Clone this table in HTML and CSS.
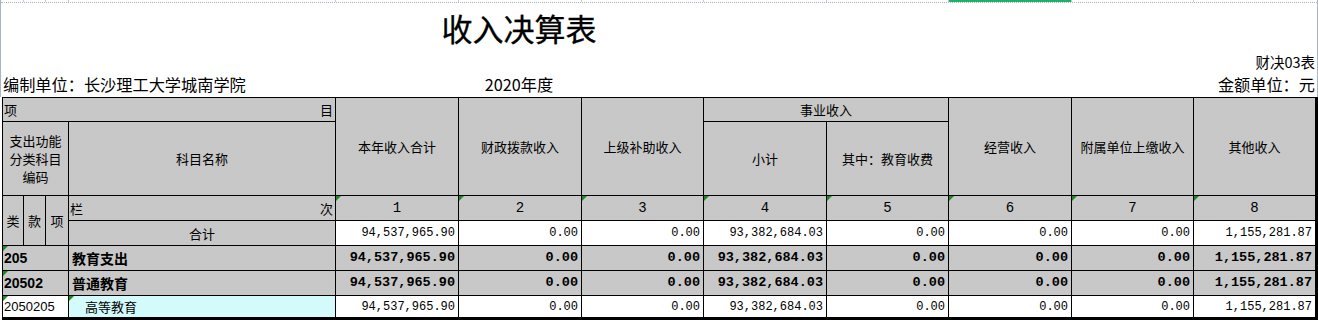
FILE: index.html
```html
<!DOCTYPE html>
<html lang="zh-CN">
<head>
<meta charset="utf-8">
<title>收入决算表</title>
<link rel="stylesheet" href="styles.css">
</head>
<body>
<div class="top">
  <div class="strip">
    <div class="ticks">
      <span></span><span></span><span></span><span></span><span></span><span></span>
      <span></span><span></span><span></span><span class="sel"></span><span></span><span></span>
    </div>
  </div>
  <div class="caption">
    <div class="title">收入决算表</div>
    <div class="formno">财决03表</div>
    <div class="unit">编制单位：长沙理工大学城南学院</div>
    <div class="year">2020年度</div>
    <div class="money">金额单位：元</div>
  </div>
</div>

<div class="sheet">
  <div class="row head">
    <div class="cell span4 split"><span>项</span><span>目</span></div>
    <div class="cell rs2">本年收入合计</div>
    <div class="cell rs2">财政拨款收入</div>
    <div class="cell rs2">上级补助收入</div>
    <div class="cell span2">事业收入</div>
    <div class="cell rs2">经营收入</div>
    <div class="cell rs2">附属单位上缴收入</div>
    <div class="cell rs2">其他收入</div>
  </div>
  <div class="row head">
    <div class="cell span3 multi">支出功能<br>分类科目<br>编码</div>
    <div class="cell">科目名称</div>
    <div class="cell">小计</div>
    <div class="cell">其中：教育收费</div>
  </div>
  <div class="row head">
    <div class="cell rs2">类</div>
    <div class="cell rs2">款</div>
    <div class="cell rs2">项</div>
    <div class="cell split"><span>栏</span><span>次</span></div>
    <div class="cell colno flag">1</div>
    <div class="cell colno flag">2</div>
    <div class="cell colno flag">3</div>
    <div class="cell colno flag">4</div>
    <div class="cell colno flag">5</div>
    <div class="cell colno flag">6</div>
    <div class="cell colno flag">7</div>
    <div class="cell colno flag">8</div>
  </div>
  <div class="row total">
    <div class="cell">合计</div>
    <div class="cell num white">94,537,965.90</div>
    <div class="cell num white">0.00</div>
    <div class="cell num white">0.00</div>
    <div class="cell num white">93,382,684.03</div>
    <div class="cell num white">0.00</div>
    <div class="cell num white">0.00</div>
    <div class="cell num white">0.00</div>
    <div class="cell num white">1,155,281.87</div>
  </div>
  <div class="row bold">
    <div class="cell span3 code flag">205</div>
    <div class="cell name">教育支出</div>
    <div class="cell num">94,537,965.90</div>
    <div class="cell num">0.00</div>
    <div class="cell num">0.00</div>
    <div class="cell num">93,382,684.03</div>
    <div class="cell num">0.00</div>
    <div class="cell num">0.00</div>
    <div class="cell num">0.00</div>
    <div class="cell num">1,155,281.87</div>
  </div>
  <div class="row bold">
    <div class="cell span3 code flag">20502</div>
    <div class="cell name">普通教育</div>
    <div class="cell num">94,537,965.90</div>
    <div class="cell num">0.00</div>
    <div class="cell num">0.00</div>
    <div class="cell num">93,382,684.03</div>
    <div class="cell num">0.00</div>
    <div class="cell num">0.00</div>
    <div class="cell num">0.00</div>
    <div class="cell num">1,155,281.87</div>
  </div>
  <div class="row item">
    <div class="cell span3 code white flag">2050205</div>
    <div class="cell name sub cyan flag">高等教育</div>
    <div class="cell num white">94,537,965.90</div>
    <div class="cell num white">0.00</div>
    <div class="cell num white">0.00</div>
    <div class="cell num white">93,382,684.03</div>
    <div class="cell num white">0.00</div>
    <div class="cell num white">0.00</div>
    <div class="cell num white">0.00</div>
    <div class="cell num white">1,155,281.87</div>
  </div>
</div>
</body>
</html>
```
FILE: styles.css
```css
* {
  box-sizing: border-box;
  margin: 0;
  padding: 0;
}

html,
body {
  background: #ffffff;
}

body {
  width: 1318px;
  height: 320px;
  overflow: hidden;
  font-family: "Noto Sans CJK SC", "Noto Sans", sans-serif;
  color: #000000;
}

/* ---------- sheet top / caption ---------- */
.top {
  width: 1318px;
  border-left: 1px solid #a8b5c7;
  border-right: 1px solid #a8b5c7;
}

.strip {
  height: 3px;
  border-bottom: 1px dotted #a9b4c3;
}

.ticks {
  display: grid;
  grid-template-columns: 20px 21px 22px 266px 122px 122px 121px 122px 121px 122px 121px 121px;
  column-gap: 1px;
  width: 1312px;
  height: 2px;
  margin-left: 2px;
  background: #c2cad6;
}

.ticks span {
  background: #ffffff;
}

.ticks .sel {
  background: #21b06c;
}

.caption {
  display: grid;
  grid-template-columns: 334px 368px 1fr;
  grid-template-rows: 50px 18px 26px;
}

.title {
  grid-column: 2;
  grid-row: 1;
  text-align: center;
  font-size: 31px;
  line-height: 50px;
  -webkit-text-stroke: 0.3px #000000;
}

.formno {
  grid-column: 3;
  grid-row: 2;
  text-align: right;
  font-size: 14.5px;
  line-height: 18px;
  padding-right: 2px;
}

.unit,
.year,
.money {
  grid-row: 3;
  font-size: 16.2px;
  line-height: 26px;
  white-space: nowrap;
}

.unit {
  grid-column: 1;
  padding-left: 2px;
}

.year {
  grid-column: 2;
  text-align: center;
}

.money {
  grid-column: 3;
  text-align: right;
  padding-right: 2px;
}

/* ---------- table ---------- */
.sheet {
  display: grid;
  grid-template-columns: 20px 21px 22px 266px 122px 122px 121px 122px 121px 122px 121px 121px;
  grid-template-rows: 23px 73px 24px 24px 24px 24px 21px;
  gap: 1px;
  width: max-content;
  margin-left: 2px;
  background: #000000;
  border-left: 1px solid #000000;
  border-top: 1px solid #000000;
  border-right: 3px solid #000000;
  border-bottom: 3px solid #000000;
}

.row {
  display: contents;
}

.cell {
  position: relative;
  display: flex;
  align-items: center;
  justify-content: center;
  background-color: #c2c2c2;
  background-image: radial-gradient(circle, rgba(255, 255, 255, 0.3) 0.5px, transparent 0.8px);
  background-size: 2px 2px;
  font-size: 13px;
  line-height: 1;
  white-space: nowrap;
  overflow: hidden;
}

.span4 { grid-column: span 4; }
.span3 { grid-column: span 3; }
.span2 { grid-column: span 2; }
.rs2 { grid-row: span 2; }

.split {
  justify-content: space-between;
  padding: 0 2px 0 1px;
}

.multi {
  text-align: center;
  line-height: 18px;
}

.colno {
  font-family: "Liberation Mono", monospace;
  font-size: 14px;
}

.num {
  justify-content: flex-end;
  padding-right: 3px;
  font-family: "Liberation Mono", monospace;
  font-size: 12px;
}

.bold .num {
  font-weight: 700;
  font-size: 13.5px;
}

.code {
  justify-content: flex-start;
  padding-left: 1px;
  font-family: "Liberation Sans", sans-serif;
  font-size: 13px;
}

.bold .code {
  font-weight: 700;
  font-size: 14px;
}

.name {
  justify-content: flex-start;
  padding-left: 3px;
  font-size: 13px;
}

.bold .name {
  font-weight: 700;
  font-size: 14px;
}

.name.sub {
  padding-left: 16px;
}

.white {
  background-color: #ffffff;
  background-image: none;
}

.cyan {
  background-color: #ccfcfc;
  background-image: radial-gradient(circle, rgba(255, 255, 255, 0.5) 0.5px, transparent 0.8px);
}

.flag::before {
  content: "";
  position: absolute;
  left: 0;
  top: 0;
  border-top: 5px solid #1d8a1d;
  border-right: 5px solid transparent;
}
```
